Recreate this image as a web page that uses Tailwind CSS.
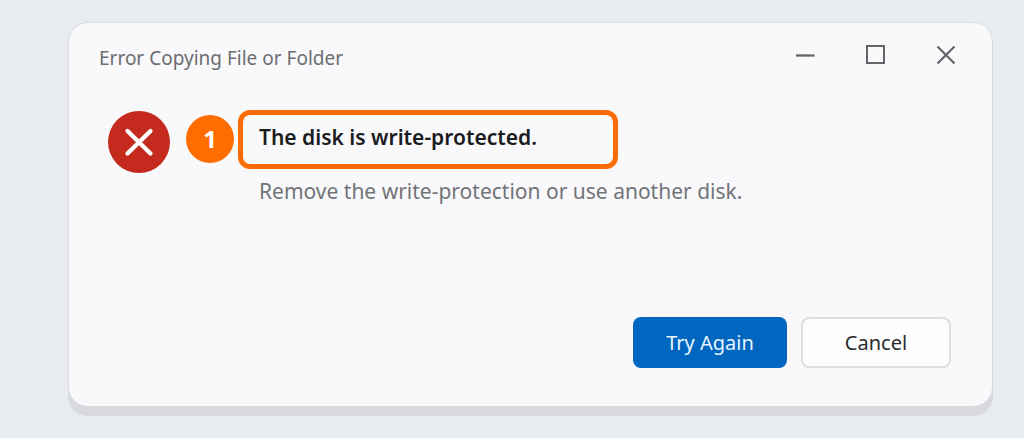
<!DOCTYPE html>
<html lang="en">
<head>
    <meta charset="UTF-8">
    <meta name="viewport" content="width=device-width, initial-scale=1.0">
    <title>Error Copying File or Folder</title>
    <!-- Tailwind CSS for styling -->
    <script src="https://cdn.jsdelivr.net/npm/@tailwindcss/browser@4"></script>
    <style>
        body {
            font-family: 'Segoe UI', 'Noto Sans', sans-serif;
        }
    </style>
</head>
<body class="bg-[#e8ebef] min-h-screen pt-[22px] pb-[22px] pl-[68px] pr-[31px]">

    <!-- Dialog window -->
    <main role="dialog" aria-labelledby="dialogTitle" class="bg-[#f9f9fc] border border-[#d9dbdf] rounded-[20px] shadow-[0_9px_0_0_#d8d9dd] pl-[30px] pr-[30px] pb-[38px]">

        <!-- Title bar -->
        <header class="flex items-start justify-between pt-4">
            <h1 id="dialogTitle" class="text-[19px] leading-8 pt-[3px] text-[#6b6d71]">Error Copying File or Folder</h1>
            <div class="flex gap-[38px] text-[#646568]">
                <button type="button" aria-label="Minimize" class="size-8">
                    <svg class="size-8" viewBox="0 0 32 32" fill="none" stroke="currentColor" stroke-width="2.3">
                        <path d="M6 16.5h18.5" />
                    </svg>
                </button>
                <button type="button" aria-label="Maximize" class="size-8">
                    <svg class="size-8" viewBox="0 0 32 32" fill="none" stroke="currentColor" stroke-width="2">
                        <path d="M7 7h17v17H7z" />
                    </svg>
                </button>
                <button type="button" aria-label="Close" class="size-8">
                    <svg class="size-8" viewBox="0 0 32 32" fill="none" stroke="currentColor" stroke-width="2.2">
                        <path d="M7.5 7.5l17 17M24.5 7.5l-17 17" />
                    </svg>
                </button>
            </div>
        </header>

        <!-- Message -->
        <section class="flex items-start pt-9 pl-[9px]">
            <svg class="size-[62px] shrink-0 mt-px" viewBox="0 0 62 62" aria-hidden="true">
                <circle cx="31" cy="31" r="31" fill="#c42b1e" />
                <path d="M19.5 20l23 22.500M42.500 20L19.500 42.500" stroke="#fff" stroke-width="4.300" stroke-linecap="round" />
            </svg>
            <span class="size-12 shrink-0 ml-4 mt-[5px] rounded-full bg-[#ff6c00] text-white text-2xl font-bold flex items-center justify-center">1</span>
            <div class="ml-1">
                <div class="w-[380px] h-[59px] border-5 border-[#fb6d04] rounded-xl pl-4 flex items-center">
                    <h2 class="text-[21px] leading-7 pb-[6px] font-semibold text-[#1b1c1e]">The disk is write-protected.</h2>
                </div>
                <p class="pl-[21px] pt-2 text-[21px] leading-7 text-[#727478]">Remove the write-protection or use another disk.</p>
            </div>
        </section>

        <!-- Actions -->
        <footer class="flex justify-end gap-[14px] pt-[112px] pr-[11px] text-xl">
            <button type="button" class="w-[154px] h-[51px] rounded-lg bg-[#0067c0] text-[#e8f4ff]">Try Again</button>
            <button type="button" class="w-[150px] h-[51px] rounded-lg bg-[#fdfdfd] border-2 border-[#dddee1] text-[#292a2c]">Cancel</button>
        </footer>

    </main>

</body>
</html>
